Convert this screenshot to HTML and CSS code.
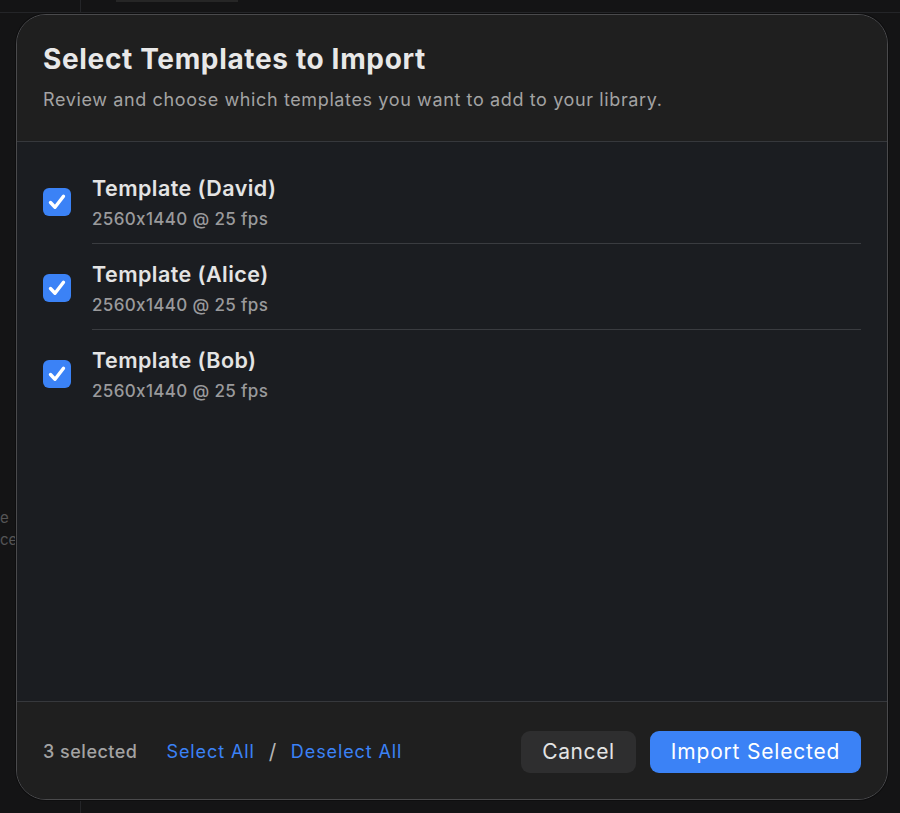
FILE: index.html
```html
<!DOCTYPE html>
<html lang="en">
<head>
<meta charset="utf-8">
<title>Select Templates to Import</title>
<link rel="stylesheet" href="styles.css">
</head>
<body>
<div class="backdrop">
  <div class="bg-line bg-hline"></div>
  <div class="bg-line bg-vline"></div>
  <div class="bg-line bg-vline-bottom"></div>
  <div class="bg-chip"></div>
  <div class="bg-text">e<br>ce</div>
  <div class="modal">
    <header class="modal-header">
      <h1 class="modal-title">Select Templates to Import</h1>
      <p class="modal-subtitle">Review and choose which templates you want to add to your library.</p>
    </header>
    <main class="modal-body">
      <ul class="template-list">
        <li class="template-row">
          <span class="checkbox"><svg viewBox="0 0 28 28" width="28" height="28"><path d="M7.5 14.5 L12 19.2 L20.5 8.3" fill="none" stroke="#fff" stroke-width="3.4" stroke-linecap="round" stroke-linejoin="round"/></svg></span>
          <div class="template-info">
            <div class="template-name">Template (David)</div>
            <div class="template-meta">2560x1440 @ 25 fps</div>
          </div>
        </li>
        <li class="template-row">
          <span class="checkbox"><svg viewBox="0 0 28 28" width="28" height="28"><path d="M7.5 14.5 L12 19.2 L20.5 8.3" fill="none" stroke="#fff" stroke-width="3.4" stroke-linecap="round" stroke-linejoin="round"/></svg></span>
          <div class="template-info">
            <div class="template-name">Template (Alice)</div>
            <div class="template-meta">2560x1440 @ 25 fps</div>
          </div>
        </li>
        <li class="template-row">
          <span class="checkbox"><svg viewBox="0 0 28 28" width="28" height="28"><path d="M7.5 14.5 L12 19.2 L20.5 8.3" fill="none" stroke="#fff" stroke-width="3.4" stroke-linecap="round" stroke-linejoin="round"/></svg></span>
          <div class="template-info">
            <div class="template-name">Template (Bob)</div>
            <div class="template-meta">2560x1440 @ 25 fps</div>
          </div>
        </li>
      </ul>
    </main>
    <footer class="modal-footer">
      <div class="footer-left">
        <span class="count">3 selected</span>
        <a class="link" href="#">Select All</a>
        <span class="slash">/</span>
        <a class="link" href="#">Deselect All</a>
      </div>
      <div class="footer-right">
        <button class="btn btn-cancel">Cancel</button>
        <button class="btn btn-primary">Import Selected</button>
      </div>
    </footer>
  </div>
</div>
</body>
</html>
```

FILE: styles.css
```css
* { box-sizing: border-box; }
html, body { margin: 0; padding: 0; }
body {
  width: 900px;
  height: 813px;
  background: #141415;
  font-family: Inter, "Noto Sans", "Liberation Sans", sans-serif;
  font-feature-settings: "calt" 0;
  overflow: hidden;
}
.backdrop {
  position: relative;
  width: 900px;
  height: 813px;
  padding: 14px 12px 14px 16px;
}
.bg-line { position: absolute; background: #242528; }
.bg-hline { left: 0; top: 12px; width: 900px; height: 1px; }
.bg-vline { left: 80px; top: 0; width: 1px; height: 12px; }
.bg-vline-bottom { left: 80px; top: 800px; width: 1px; height: 13px; }
.bg-chip { position: absolute; left: 116px; top: 0; width: 122px; height: 2px; background: #262626; }
.bg-text {
  position: absolute;
  left: 0;
  top: 507px;
  color: #555;
  font-size: 15px;
  line-height: 22px;
}
.modal {
  position: relative;
  width: 872px;
  height: 786px;
  border: 1px solid #4a4a4c;
  border-radius: 30px;
  overflow: hidden;
  display: flex;
  flex-direction: column;
  background: #1b1d21;
  box-shadow: 0 0 0 1px #0e0e0f;
}
.modal-header {
  background: #1f1f1f;
  padding: 27px 26px 0 26px;
  height: 127px;
  border-bottom: 1px solid #36383c;
}
.modal-title {
  margin: 0;
  font-size: 28px;
  font-weight: 700;
  color: #e8e8e8;
  line-height: 34px;
  letter-spacing: 0.65px;
}
.modal-subtitle {
  margin: 13px 0 0 0;
  font-size: 18px;
  color: #a3a3a3;
  line-height: 22px;
  letter-spacing: 0.62px;
}
.modal-body {
  flex: 1;
  background: #1b1d21;
  padding: 28px 26px 0 26px;
}
.template-list {
  list-style: none;
  margin: 0;
  padding: 0;
}
.template-row {
  display: flex;
  align-items: flex-start;
  gap: 21px;
  height: 86px;
}
.checkbox {
  flex: none;
  width: 28px;
  height: 28px;
  margin-top: 18px;
  background: #3b82f6;
  border-radius: 6px;
  display: flex;
}
.template-info {
  flex: 1;
  height: 74px;
  border-bottom: 1px solid #3a3c40;
  padding-top: 3px;
}
.template-row:last-child .template-info { border-bottom: none; }
.template-name {
  font-size: 21.5px;
  font-weight: 600;
  color: #e4e4e4;
  line-height: 30px;
  letter-spacing: 0.45px;
}
.template-meta {
  margin-top: 5px;
  font-size: 17px;
  font-weight: 500;
  color: #9a9a9c;
  line-height: 22px;
  letter-spacing: 0.35px;
}
.modal-footer {
  background: #1f1f1f;
  height: 98px;
  border-top: 1px solid #36383c;
  display: flex;
  align-items: center;
  justify-content: space-between;
  padding: 0 26px 0 26px;
}
.footer-left {
  display: flex;
  align-items: center;
  font-size: 18px;
  letter-spacing: 0.5px;
  padding-top: 2px;
}
.count { color: #a3a3a3; font-weight: 500; margin-right: 29px; }
.link { color: #3b82f6; text-decoration: none; letter-spacing: 0.9px; }
.slash { color: #b5b5b5; margin: 0 14px; font-size: 21px; }
.footer-right {
  display: flex;
  gap: 14px;
  padding-top: 2px;
}
.btn {
  font-family: inherit;
  font-feature-settings: "calt" 0;
  font-size: 21px;
  height: 42px;
  border: none;
  border-radius: 9px;
  padding: 0;
}
.btn-cancel { background: #2e2e2f; color: #e4e4e4; width: 115px; letter-spacing: 0.6px; }
.btn-primary { background: #3b82f6; color: #ffffff; width: 211px; letter-spacing: 0.8px; }
```
